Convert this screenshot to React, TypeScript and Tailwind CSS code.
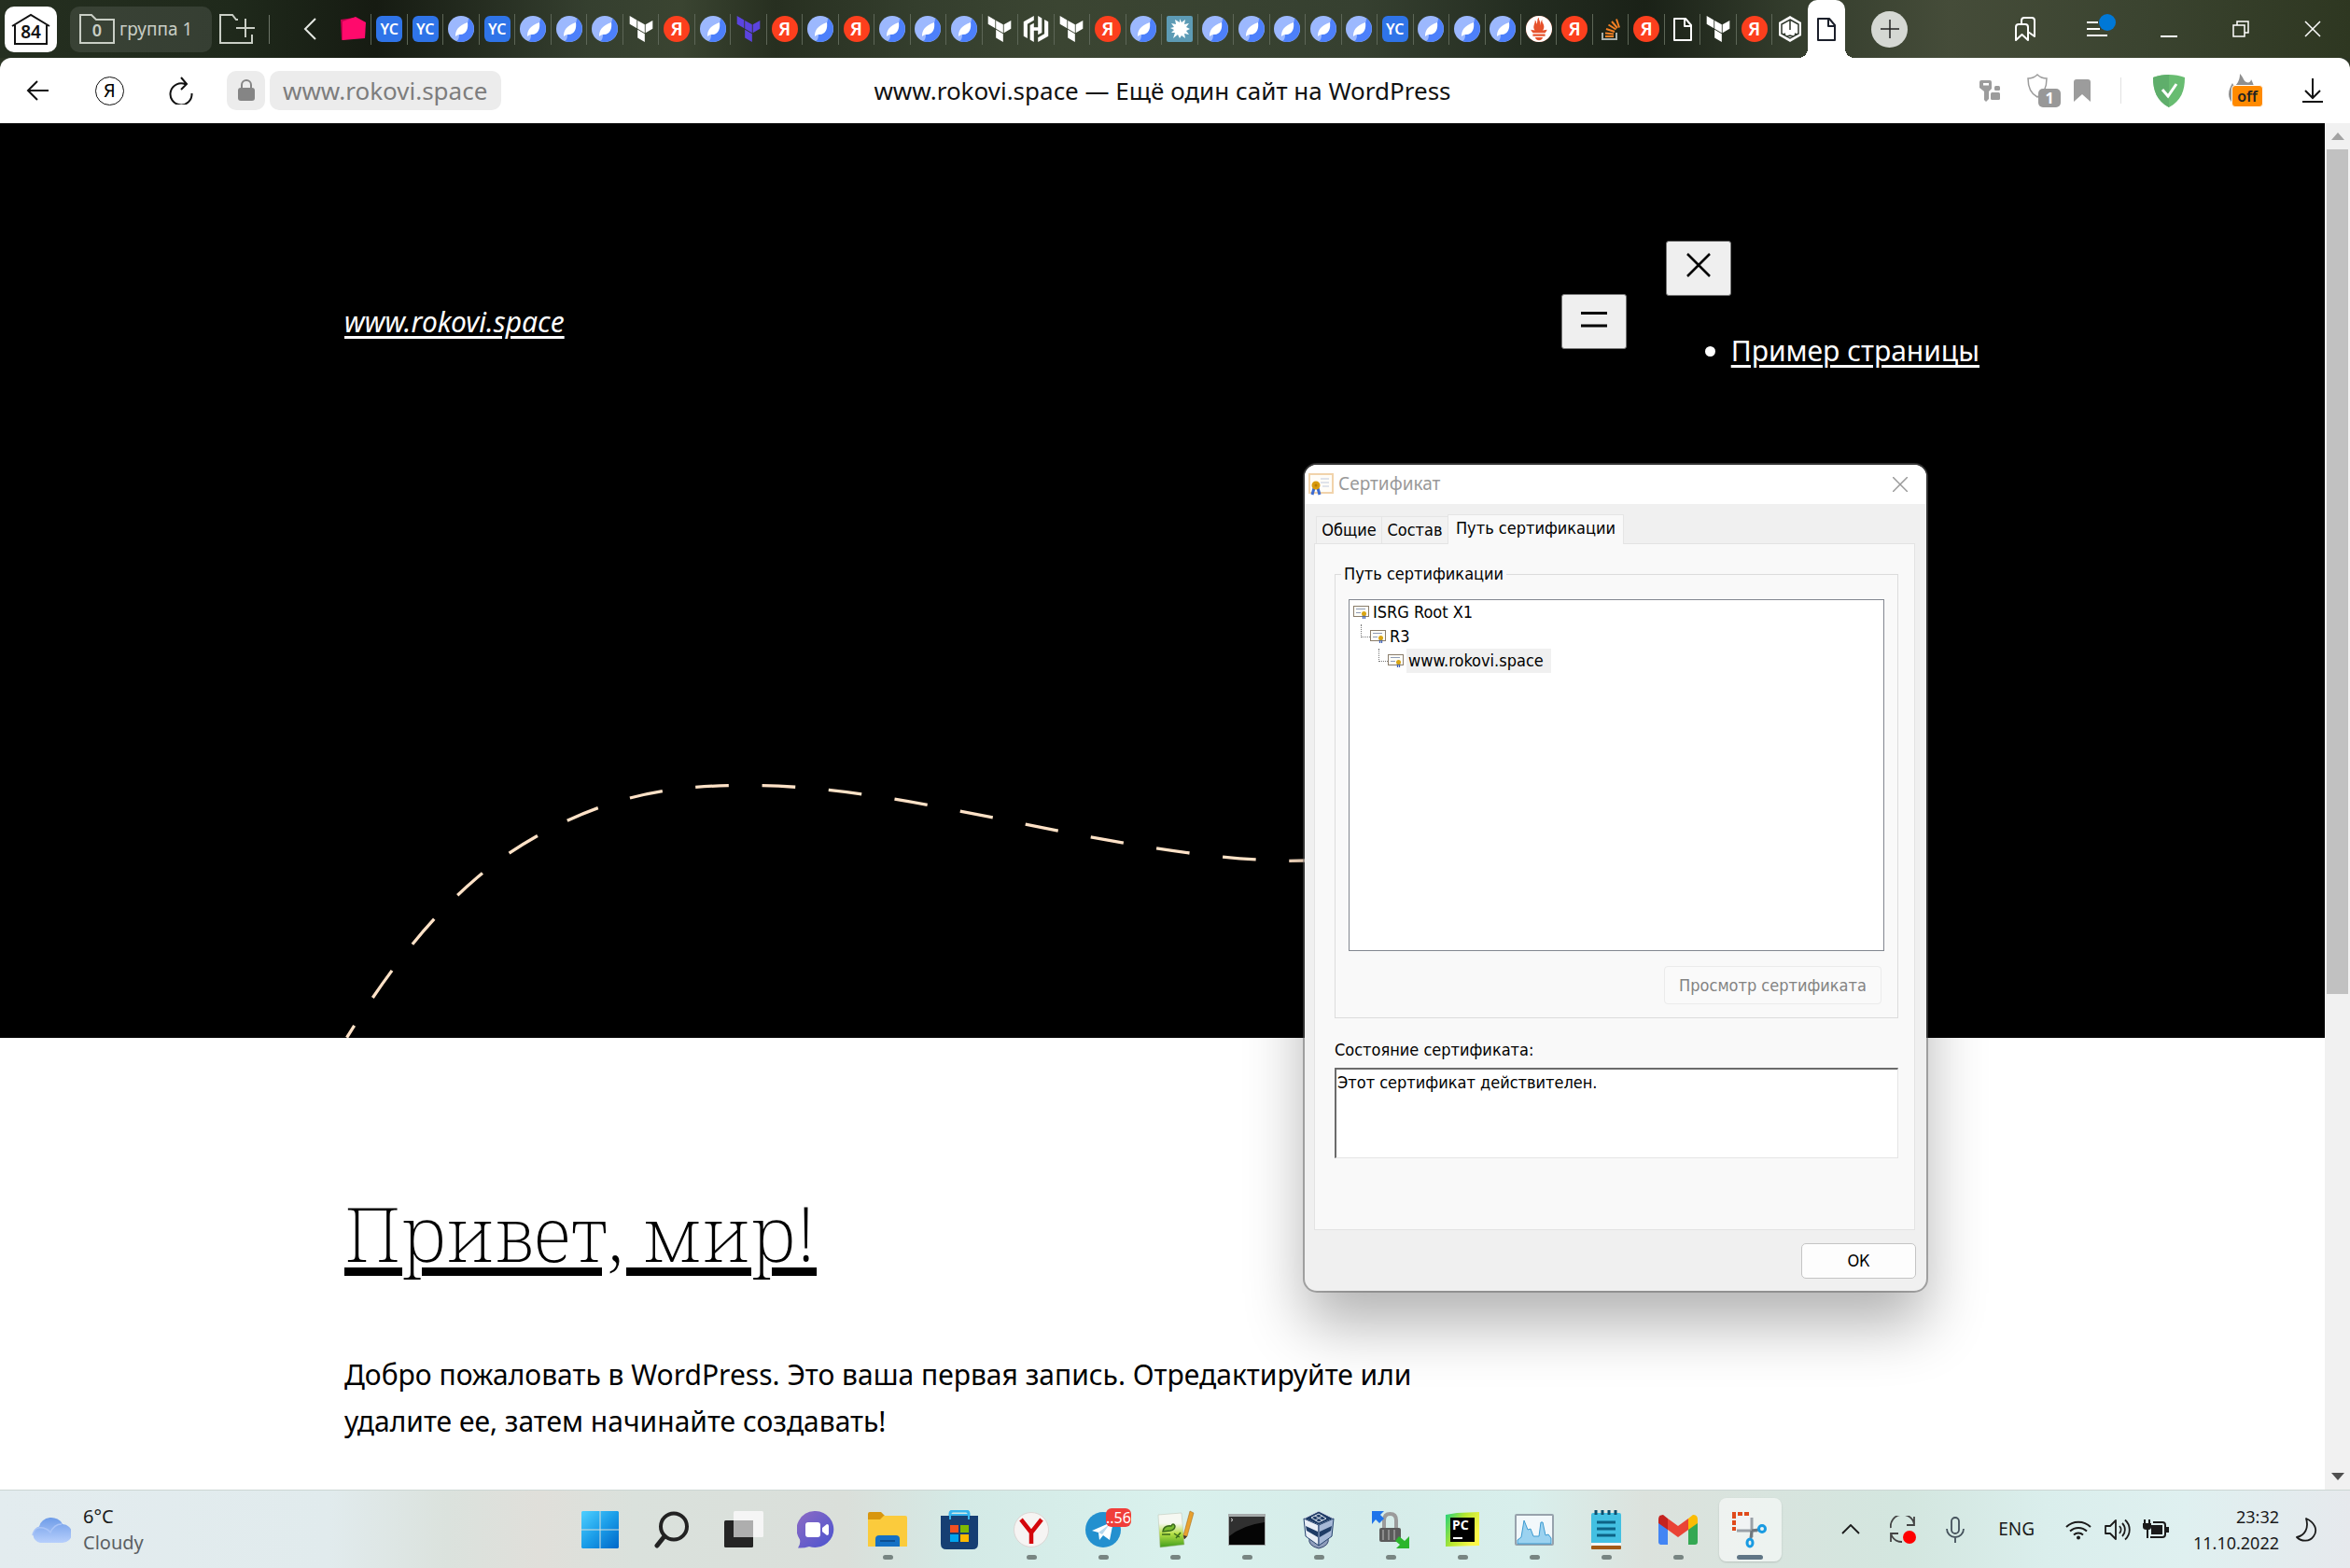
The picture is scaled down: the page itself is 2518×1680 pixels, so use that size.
import React from "react";
import { SiHashicorp, SiPrometheus } from "react-icons/si";

type Fav =
  | "pink" | "yc" | "drop" | "tf" | "tfp" | "ya" | "hc" | "splat"
  | "prom" | "stack" | "file" | "hex";

const tabs: Fav[] = [
  "pink", "yc", "yc", "drop", "yc", "drop", "drop", "drop", "tf", "ya", "drop", "tfp", "ya", "drop",
  "ya", "drop", "drop", "drop", "tf", "hc", "tf", "ya", "drop", "splat", "drop", "drop", "drop", "drop",
  "drop", "yc", "drop", "drop", "drop", "prom", "ya", "stack", "ya", "file", "tf", "ya", "hex",
];

function Terraform({ color }: { color: string }) {
  return (
    <svg viewBox="0 0 24 24" className="size-7" fill={color}>
      <path d="M1.44 0v7.575l6.561 3.79V3.787zm21.12 4.227l-6.561 3.791v7.574l6.56-3.787zM8.72 4.23v7.575l6.561 3.787V8.018zm0 8.405v7.575L15.28 24v-7.578z" />
    </svg>
  );
}

function PageIcon({ color }: { color: string }) {
  return (
    <svg viewBox="0 0 28 28" className="size-7" fill="none" stroke={color} strokeWidth="2" strokeLinejoin="round">
      <path d="M5 3h12l6 7v16H5z" />
      <path d="M16 3v8h7" />
    </svg>
  );
}

function Favicon({ kind }: { kind: Fav }) {
  switch (kind) {
    case "pink":
      return (
        <svg viewBox="0 0 28 28" className="size-7">
          <path d="M0 4l14-2-2 22-11 2z" fill="#c4004f" />
          <path d="M2 6L16 1l11 6-1 17-24 2z" fill="#ff0a6c" />
        </svg>
      );
    case "yc":
      return (
        <span className="flex size-7 items-center justify-center rounded-md bg-[#2f74e8] text-base font-semibold text-white">YC</span>
      );
    case "drop":
      return (
        <svg viewBox="0 0 28 28" className="size-7">
          <circle cx="14" cy="14" r="14" fill="#9cb8fe" />
          <path d="M22 2.500A14 14 0 0 1 9 27C13 25 11 21 13 18s9-7 9-15.500z" fill="#4d80fb" />
          <path d="M21 7c1 6-1 13-8 13-2 0-3 .5-5 2 0-6 2-11 13-15z" fill="#fff" />
        </svg>
      );
    case "tf":
      return <Terraform color="#ffffff" />;
    case "tfp":
      return <Terraform color="#5b44e0" />;
    case "ya":
      return (
        <span className="flex size-7 items-center justify-center rounded-full bg-[#fc3f1d] text-xl leading-none font-semibold text-white">Я</span>
      );
    case "hc":
      return <SiHashicorp className="size-7 text-white" />;
    case "splat":
      return (
        <svg viewBox="0 0 28 28" className="size-7">
          <rect width="28" height="28" rx="2" fill="#5d9bb5" />
          <path d="M14 3l2 4 4-3-1 5 5-1-3 4 4 2-4 2 3 4-5-1 1 5-4-3-2 3-2-4-5 4 2-6-4 0 3-3-4-2 4-1-3-4 5 1-1-5 5 3z" fill="#fff" />
        </svg>
      );
    case "prom":
      return (
        <span className="flex size-7 rounded-full bg-[#e6522c]">
          <SiPrometheus className="size-7 text-white" />
        </span>
      );
    case "stack":
      return (
        <svg viewBox="0 0 28 28" className="size-7" fill="none" strokeWidth="2">
          <path d="M5 18v7h15v-7" stroke="#a9b0ad" />
          <path d="M8 22h9M8 18.500l9 1M9 14l9 3M11.500 9.500l8 5M15 6l6 7M20 3.500l3 9" stroke="#f48024" />
        </svg>
      );
    case "file":
      return <PageIcon color="#ffffff" />;
    case "hex":
      return (
        <svg viewBox="0 0 28 28" className="size-7">
          <path d="M14 0l12 7v14l-12 7-12-7V7z" fill="#fff" />
          <path d="M14 4l9 5v10l-9 5-9-5V9zM14 5v10M9 19l-2 1M19 19l2 1M11 22l3-1 3 1" fill="none" stroke="#2c352a" strokeWidth="1.500" />
        </svg>
      );
  }
}

function TabBar() {
  return (
    <header className="flex h-[62px] items-center bg-[linear-gradient(90deg,#252f20_0%,#1f291b_10%,#161b12_16%,#353f2f_25%,#3a4431_29%,#272f20_33%,#343e2d_39%,#3b4532_45%,#364030_58%,#232c20_65%,#1a2117_70%,#333c2c_76%,#454c39_83%,#3b4430_91%,#2e3721_100%)] pr-0.5 pl-[5px]">
      <button aria-label="Табло" className="flex h-[49px] w-14 items-center justify-center rounded-[10px] bg-white">
        <svg viewBox="0 0 42 34" className="h-[34px] w-[42px]" fill="none" stroke="#111" strokeWidth="2">
          <path d="M1 14L21 2l20 12M4 13v20h34V13" />
          <text x="21" y="27" textAnchor="middle" fontSize="19" fontWeight="600" fill="#111" stroke="none">84</text>
        </svg>
      </button>
      <button className="ml-3.5 flex h-[49px] w-[152px] items-center gap-[5px] rounded-[10px] bg-white/10 pl-2.5 text-[19px] text-[#c9cec5]">
        <svg viewBox="0 0 38 32" className="h-8 w-[38px]" fill="none" stroke="#c9cec5" strokeWidth="2">
          <path d="M1 31V1h12l5 5h19v25z" />
          <text x="19" y="24" textAnchor="middle" fontSize="18" fontWeight="600" fill="#c9cec5" stroke="none">0</text>
        </svg>
        группа 1
      </button>
      <button aria-label="Новая группа" className="ml-2">
        <svg viewBox="0 0 38 32" className="h-8 w-[38px]" fill="none" stroke="#c9cec5" strokeWidth="2">
          <path d="M20 6h-2l-4-5H1v30h34v-9M28 5v20M18 15h20" />
        </svg>
      </button>
      <span className="ml-[15px] h-[31px] w-px bg-[#6d7568]" />
      <button aria-label="Назад по вкладкам" className="ml-9">
        <svg viewBox="0 0 14 24" className="h-6 w-3.5" fill="none" stroke="#e5e8e2" strokeWidth="2">
          <path d="M13 1L2 12l11 11" />
        </svg>
      </button>
      <nav aria-label="Вкладки" className="ml-5 flex min-w-0 flex-1">
        {tabs.map((k, i) => (
          <button
            key={i}
            aria-label={`Вкладка ${i + 1}`}
            className="flex h-[33px] min-w-0 flex-1 items-center justify-center border-l border-[#5d6657] first:border-transparent"
          >
            <Favicon kind={k} />
          </button>
        ))}
      </nav>
      <button aria-label="Текущая вкладка" className="relative flex h-[62px] w-10 items-center justify-center rounded-t-[10px] bg-white">
        <span className="absolute bottom-0 -left-[10px] size-[10px] bg-[radial-gradient(circle_at_0_0,transparent_10px,#fff_10px)]" />
        <span className="absolute -right-[10px] bottom-0 size-[10px] bg-[radial-gradient(circle_at_100%_0,transparent_10px,#fff_10px)]" />
        <PageIcon color="#1b1f2a" />
      </button>
      <button aria-label="Новая вкладка" className="ml-7 flex size-[39px] items-center justify-center rounded-full bg-[#d5d8d3]">
        <svg viewBox="0 0 20 20" className="size-5" stroke="#222" strokeWidth="1.500">
          <path d="M10 0v20M0 10h20" />
        </svg>
      </button>
      <div className="ml-[87px] flex">
        <button aria-label="Закладки" className="flex h-[62px] w-[77px] items-center justify-center">
          <svg viewBox="0 0 24 26" className="h-[26px] w-6" fill="none" stroke="#fff" strokeWidth="2" strokeLinejoin="round">
            <path d="M2 11q0-3 3-3h7q3 0 3 3v14l-6.500-6L2 25zM8 8V4q0-3 3-3h8q3 0 3 3v17l-7-5" />
          </svg>
        </button>
        <button aria-label="Меню" className="relative flex h-[62px] w-[77px] items-center justify-center">
          <svg viewBox="0 0 22 18" className="h-[18px] w-[22px]" stroke="#fff" strokeWidth="2">
            <path d="M0 2h12M0 9h14M0 16h22" />
          </svg>
          <span className="absolute top-[15px] right-[18px] size-[18px] rounded-full bg-[#0078d7]" />
        </button>
        <button aria-label="Свернуть" className="flex h-[62px] w-[77px] items-center justify-center">
          <span className="mt-4 h-0.5 w-[18px] bg-white" />
        </button>
        <button aria-label="Восстановить" className="flex h-[62px] w-[77px] items-center justify-center">
          <svg viewBox="0 0 18 18" className="size-[18px]" fill="none" stroke="#fff" strokeWidth="1.500">
            <path d="M1 5h12v12H1zM5 5V1h12v12h-4" />
          </svg>
        </button>
        <button aria-label="Закрыть" className="flex h-[62px] w-[77px] items-center justify-center">
          <svg viewBox="0 0 18 18" className="size-[18px]" stroke="#fff" strokeWidth="1.500">
            <path d="M1 1l16 16M17 1L1 17" />
          </svg>
        </button>
      </div>
    </header>
  );
}

function Toolbar() {
  return (
    <div className="bg-[#2c3524]">
      <div className="grid h-[70px] grid-cols-[1fr_auto_1fr] items-center rounded-t-xl bg-white">
        <div className="flex items-center pl-7">
          <button aria-label="Назад">
            <svg viewBox="0 0 24 22" className="h-[22px] w-6" fill="none" stroke="#111" strokeWidth="2">
              <path d="M24 11H2M12 1L2 11l10 10" />
            </svg>
          </button>
          <button aria-label="Яндекс" className="ml-[50px] flex size-[31px] items-center justify-center rounded-full border-[1.5px] border-[#111] text-xl leading-none">
            Я
          </button>
          <button aria-label="Обновить" className="ml-12">
            <svg viewBox="0 0 26 30" className="h-[30px] w-[26px]" fill="none" stroke="#111" strokeWidth="2">
              <path d="M18 8.500A11.500 11.500 0 1 0 24.500 18M13 1l6 7-6 6" />
            </svg>
          </button>
          <span className="ml-9 flex h-[42px] w-[41px] items-center justify-center rounded-[10px] bg-[#ececec]">
            <svg viewBox="0 0 18 24" className="h-6 w-[18px]">
              <path d="M4 11V6a5 5 0 0 1 10 0v5" fill="none" stroke="#858585" strokeWidth="2" />
              <rect y="9" width="18" height="14" rx="3" fill="#858585" />
            </svg>
          </span>
          <a href="#" className="ml-[5px] flex h-[42px] w-[248px] items-center rounded-[10px] bg-[#ececec] pl-3.5 text-[26px] text-[#7d7d7d]">
            www.rokovi.space
          </a>
        </div>
        <h2 className="pr-[27px] text-[26px] text-[#111]">www.rokovi.space — Ещё один сайт на WordPress</h2>
        <div className="flex items-center justify-end pr-[29px]">
          <svg viewBox="0 0 24 24" className="h-6 w-6">
            <path d="M1 3q0-2 2-2h9q2 0 2 2v7l-3 3v8l-3 3-2-2V13l-5-4z" fill="#9c9c9c" />
            <rect x="5" y="4" width="6" height="2.500" fill="#fff" />
            <rect x="17" y="7" width="6" height="5" rx="1.500" fill="#9c9c9c" />
            <rect x="13" y="14" width="10" height="8" rx="1.500" fill="#9c9c9c" />
          </svg>
          <span className="relative ml-7 flex h-9 w-9">
            <svg viewBox="0 0 22 26" className="h-[26px] w-[22px]" fill="none" stroke="#9c9c9c" strokeWidth="1.500">
              <path d="M11 1c3 3 6 4 10 4 0 9-2 16-10 20C3 21 1 14 1 5c4 0 7-1 10-4z" />
            </svg>
            <span className="absolute right-0 bottom-0 flex h-5 w-6 items-center justify-center rounded-[5px] bg-[#989898] text-base font-bold text-white">1</span>
          </span>
          <svg viewBox="0 0 18 24" className="ml-3.5 h-6 w-[18px]">
            <path d="M0 3q0-3 3-3h12q3 0 3 3v21l-9-8-9 8z" fill="#9c9c9c" />
          </svg>
          <span className="ml-8 h-7 w-px bg-[#e2e2e2]" />
          <svg viewBox="0 0 34 35" className="ml-[34px] h-[35px] w-[34px]">
            <path d="M17 0c6 0 12 1 17 3 0 14-4 25-17 32C4 28 0 17 0 3 5 1 11 0 17 0z" fill="#68bc71" />
            <path d="M17 0v35C4 28 0 17 0 3 5 1 11 0 17 0z" fill="#5fae6b" />
            <path d="M10 16l6 7 9-13" fill="none" stroke="#fff" strokeWidth="3" />
          </svg>
          <span className="relative ml-[46px] flex h-9 w-[38px]">
            <svg viewBox="0 0 30 36" className="h-9 w-[30px]" fill="#8f8f8f">
              <path d="M13 0c4 4 4 8 7 9 2 1 5 0 5-3 3 6 4 9 4 14 0 9-6 15-14 15S1 29 1 22c0-5 2-8 4-12l2 4c4-4 6-8 6-14z" />
            </svg>
            <span className="absolute right-0 bottom-0 flex h-6 w-[34px] items-center justify-center rounded-[4px] border border-white bg-[#ff8a00] text-base leading-none font-semibold text-[#222]">off</span>
          </span>
          <button aria-label="Загрузки" className="ml-[42px]">
            <svg viewBox="0 0 22 26" className="h-[26px] w-[22px]" fill="none" stroke="#111" strokeWidth="2">
              <path d="M11 0v21M3 13l8 8 8-8M0 25h22" />
            </svg>
          </button>
        </div>
      </div>
    </div>
  );
}

function Site() {
  return (
    <div className="min-w-0 flex-1 overflow-hidden bg-white">
      <header className="bg-black pt-[126px] text-white">
        <div className="flex items-center justify-between pr-[370px] pl-[369px] text-[30px]">
          <a href="#" className="italic underline decoration-[3px] underline-offset-[4px]">www.rokovi.space</a>
          <nav className="flex items-center gap-[42px]">
            <button aria-label="Открыть меню" className="flex h-[59px] w-[70px] justify-center rounded-[3px] border border-[#767676] bg-[#efefef] pt-[18px]">
              <svg viewBox="0 0 28 17" className="h-[17px] w-7" stroke="#000" strokeWidth="3">
                <path d="M0 1.500h28M0 15h28" />
              </svg>
            </button>
            <div>
              <button aria-label="Закрыть меню" className="flex h-[59px] w-[70px] justify-center rounded-[3px] border border-[#767676] bg-[#efefef] pt-3">
                <svg viewBox="0 0 26 26" className="size-[26px]" stroke="#000" strokeWidth="2.500">
                  <path d="M1 1l24 24M25 1L1 25" />
                </svg>
              </button>
              <ul className="mt-[34px] mb-[30px] list-disc pl-[70px] leading-[50px]">
                <li><a href="#" className="underline decoration-[3px] underline-offset-[4px]">Пример страницы</a></li>
              </ul>
            </div>
          </nav>
        </div>
        <svg viewBox="0 828 1400 284" className="mt-[397px] block h-[284px] w-[1400px]" fill="none" stroke="#ffe2c7" strokeWidth="3.300" strokeDasharray="35.7 35.7" strokeDashoffset="20.500">
          <path d="M371.600 1111.700C425 1026 487 945 575 896S733 840.200 816 841.700S982 859.700 1064 876S1274 921 1381 922.300L1400 922" />
        </svg>
      </header>
      <main className="pt-[163px] pl-[369px] text-black">
        <h1 className="font-['Noto_Serif',serif] text-[80px] leading-[92px] font-extralight">
          <a href="#" className="underline decoration-[9px] underline-offset-[6px]">Привет, мир!</a>
        </h1>
        <p className="mt-[81px] max-w-[1160px] text-[30px] leading-[50px]">
          Добро пожаловать в WordPress. Это ваша первая запись. Отредактируйте или удалите ее, затем начинайте создавать!
        </p>
      </main>
    </div>
  );
}

function ScrollBar() {
  return (
    <aside className="flex w-[27px] flex-col items-center bg-[#f1f1f1]">
      <span className="flex h-7 items-center">
        <svg viewBox="0 0 14 8" className="h-2 w-3.5" fill="#a3a3a3"><path d="M0 8l7-8 7 8z" /></svg>
      </span>
      <span className="h-[905px] w-[23px] bg-[#c1c1c1]" />
      <span className="mt-auto flex h-7 items-center">
        <svg viewBox="0 0 14 8" className="h-2 w-3.5" fill="#505050"><path d="M0 0l7 8 7-8z" /></svg>
      </span>
    </aside>
  );
}

function CertIcon() {
  return (
    <svg viewBox="0 0 17 14" className="h-3.5 w-[17px] shrink-0">
      <rect x="0.500" y="0.500" width="16" height="11" fill="#fdfdf8" stroke="#8a7d6b" />
      <path d="M3 3.500h10M3 7.500h5" stroke="#8e9bb5" />
      <path d="M10.500 10v4M12.500 10v4" stroke="#3f62b5" strokeWidth="1.300" />
      <circle cx="11.500" cy="8.500" r="2.500" fill="#d9a514" />
    </svg>
  );
}

function Dialog() {
  return (
    <section
      role="dialog"
      aria-label="Сертификат"
      className="absolute top-[498px] left-[1398px] w-[666px] overflow-hidden rounded-[13px] bg-[#f0f0f0] font-['DejaVu_Sans_Condensed',sans-serif] text-lg text-black shadow-[0_0_0_2px_rgba(100,100,100,0.5),0_36px_64px_rgba(0,0,0,0.3)]"
    >
      <div className="flex h-[42px] items-center bg-white pr-5 pl-1 font-['Noto_Sans',sans-serif] text-[19px] text-[#999]">
        <svg viewBox="0 0 27 24" className="h-6 w-[27px]">
          <rect x="1" y="1" width="25" height="20" fill="#fffdf8" stroke="#f1d3ab" strokeWidth="2" />
          <path d="M13 6h9M13 10h9M15 14h7" stroke="#dfe3ea" strokeWidth="2" />
          <path d="M6 16l-2 7M10 16l2 7" stroke="#3c6bd0" strokeWidth="3" />
          <circle cx="8" cy="13" r="4.500" fill="#d89b0d" />
          <circle cx="8" cy="13" r="1.500" fill="#b87a05" />
        </svg>
        <h2 className="ml-[5px]">Сертификат</h2>
        <button aria-label="Закрыть" className="ml-auto">
          <svg viewBox="0 0 16 16" className="size-4" stroke="#999" strokeWidth="1.500"><path d="M0 0l16 16M16 0L0 16" /></svg>
        </button>
      </div>
      <div role="tablist" className="flex h-[42px] items-end pl-3">
        <button role="tab" className="h-[29px] w-[71px] border border-b-0 border-[#e5e5e5] bg-[#f2f2f2] leading-7">Общие</button>
        <button role="tab" className="h-[29px] w-[70px] border-t border-[#e5e5e5] bg-[#f2f2f2] leading-7">Состав</button>
        <button role="tab" aria-selected="true" className="relative z-10 -mb-px h-8 w-[189px] border border-b-0 border-[#e5e5e5] bg-[#f9f9f9] pb-1 leading-7">Путь сертификации</button>
      </div>
      <div className="mr-3 ml-2.5 border border-[#e3e3e3] bg-[#f9f9f9] px-[17px] pt-[19px] pb-[76px] pl-[21px]">
        <fieldset className="border border-[#dcdcdc] px-3.5 pb-3.5">
          <legend className="-ml-2 px-[3px] leading-[26px]">Путь сертификации</legend>
          <ul className="mt-3.5 h-[377px] border border-[#828790] bg-white leading-[26px]">
            <li className="flex h-[26px] items-center pl-1"><CertIcon /><span className="ml-1">ISRG Root X1</span></li>
            <li className="flex h-[26px] items-center pl-3">
              <span className="h-3.5 w-2.5 self-start border-b border-l border-dotted border-[#777]" />
              <CertIcon /><span className="ml-1">R3</span>
            </li>
            <li className="flex h-[26px] items-center pl-[31px]">
              <span className="h-3.5 w-2.5 self-start border-b border-l border-dotted border-[#777]" />
              <CertIcon /><span className="ml-[3px] bg-[#f0f0f0] pr-2 pl-0.5">www.rokovi.space</span>
            </li>
          </ul>
          <div className="mt-4 flex justify-end pr-[3px]">
            <button disabled className="h-[41px] w-[233px] rounded-[4px] border border-[#ebebeb] bg-[#fafafa] text-[#838383]">Просмотр сертификата</button>
          </div>
        </fieldset>
        <label htmlFor="status" className="mt-[21px] block leading-[26px]">Состояние сертификата:</label>
        <textarea
          id="status"
          readOnly
          defaultValue="Этот сертификат действителен."
          className="mt-1.5 block h-[97px] w-full resize-none border-t-2 border-r border-b border-l-2 border-t-[#6b6b6b] border-r-[#e5e5e5] border-b-[#e5e5e5] border-l-[#6b6b6b] bg-white pl-px leading-7"
        />
      </div>
      <div className="flex h-[65px] items-start justify-end pt-3.5 pr-[11px]">
        <button className="h-[38px] w-[123px] rounded-[5px] border border-[#c4c4c4] bg-[#fdfdfd]">ОК</button>
      </div>
    </section>
  );
}

const apps: { name: string; running?: boolean; active?: boolean; icon: React.ReactNode }[] = [
  {
    name: "Пуск",
    icon: (
      <svg viewBox="0 0 40 40" className="size-10">
        <defs>
          <linearGradient id="win" x1="0" y1="0" x2="1" y2="1">
            <stop offset="0" stopColor="#4fd0ff" /><stop offset="0.500" stopColor="#1b9de8" /><stop offset="1" stopColor="#0067c8" />
          </linearGradient>
        </defs>
        <path d="M1 0h18.500v19.500H0V1zM20.500 0H39l1 1v18.500H20.500zM0 20.500h19.500V40H1l-1-1zM20.500 20.500H40V39l-1 1H20.500z" fill="url(#win)" />
      </svg>
    ),
  },
  {
    name: "Поиск",
    icon: (
      <svg viewBox="0 0 40 40" className="size-10" fill="none" stroke="#222" strokeLinecap="round">
        <circle cx="22" cy="16.500" r="14" strokeWidth="4" /><path d="M12 27L4 37" strokeWidth="5" />
      </svg>
    ),
  },
  {
    name: "Представление задач",
    icon: (
      <svg viewBox="0 0 42 40" className="h-10 w-[42px]">
        <rect x="0" y="10" width="31" height="29" rx="1.500" fill="#242424" />
        <rect x="10" y="0" width="32" height="28" rx="1.500" fill="#f7f7f7" fillOpacity="0.900" />
        <rect x="10" y="10" width="21" height="18" fill="#aeaeae" />
      </svg>
    ),
  },
  {
    name: "Чат",
    icon: (
      <svg viewBox="0 0 40 40" className="size-10">
        <defs><linearGradient id="chat" x1="0" y1="0" x2="1" y2="1"><stop offset="0" stopColor="#8e6bc4" /><stop offset="1" stopColor="#4a53cf" /></linearGradient></defs>
        <path d="M20 0a20 19.500 0 1 1-7 38q-6 2-12 1.500 3-4 2-9A20 19.500 0 0 1 20 0z" fill="url(#chat)" />
        <rect x="9" y="12" width="16" height="16" rx="3" fill="#fff" /><path d="M27 18l5-4q2 0 2 2v8q0 2-2 2l-5-4z" fill="#fff" />
      </svg>
    ),
  },
  {
    name: "Проводник", running: true,
    icon: (
      <svg viewBox="0 0 42 38" className="h-[38px] w-[42px]">
        <path d="M0 2q0-2 2-2h12l5 5v8H0z" fill="#d8960f" /><path d="M0 8h13l4-4h23q2 0 2 2v31H0z" fill="#fbcb3c" />
        <path d="M8 37v-8q0-4 4-4h18q4 0 4 4v8z" fill="#1470c4" /><path d="M13 31h16" stroke="#0b4e93" strokeWidth="2" />
      </svg>
    ),
  },
  {
    name: "Store",
    icon: (
      <svg viewBox="0 0 40 42" className="h-[42px] w-10">
        <path d="M10 10V4q0-3 3-3h14q3 0 3 3v6" fill="none" stroke="#37b4ee" strokeWidth="3" />
        <path d="M0 6h40v30q0 6-6 6H6q-6 0-6-6z" fill="#173f73" />
        <path d="M10 5h20v5" fill="none" stroke="#37b4ee" strokeWidth="2" /><path d="M10 5v5" stroke="#37b4ee" strokeWidth="2" />
        <path d="M10 16h9v8h-9z" fill="#f25022" /><path d="M21 16h9v8h-9z" fill="#7fba00" />
        <path d="M10 26h9v8h-9z" fill="#00a4ef" /><path d="M21 26h9v8h-9z" fill="#ffb900" />
      </svg>
    ),
  },
  {
    name: "Яндекс Браузер", running: true,
    icon: (
      <svg viewBox="0 0 40 40" className="size-10">
        <circle cx="20" cy="20" r="18.500" fill="#f6f4f3" stroke="#dcd6d4" />
        <path d="M9 9l11 14L31 9M20 22v13" fill="none" stroke="#d4070c" strokeWidth="4.500" />
      </svg>
    ),
  },
  {
    name: "Telegram", running: true,
    icon: (
      <span className="relative flex">
        <svg viewBox="0 0 40 40" className="size-10">
          <circle cx="20" cy="20" r="19" fill="#2390cf" /><path d="M8 21l23-10-4 20-7-5-4 5-1-8z" fill="#fff" /><path d="M15 23l12-9-8 11" fill="#b8d8ec" />
        </svg>
        <span className="absolute -top-[3px] -right-[10px] flex h-5 w-[27px] items-center justify-center rounded-md bg-[#f03e3a] text-base text-white">..56</span>
      </span>
    ),
  },
  {
    name: "Notepad++", running: true,
    icon: (
      <svg viewBox="0 0 42 42" className="size-[42px]">
        <defs><linearGradient id="npp" x1="0" y1="0" x2="0" y2="1"><stop offset="0.300" stopColor="#f6f8f2" /><stop offset="0.600" stopColor="#b6e045" /><stop offset="1" stopColor="#3f9c1c" /></linearGradient></defs>
        <path d="M3 5l25-2 3 34-26 3z" fill="url(#npp)" stroke="#b9c0b0" strokeWidth="0.500" />
        <path d="M8 23q1-7 9-6 2-4 4 0 0 4-5 5zM7 26h9M20 25l6 4M22 30l5-6" stroke="#3a6b1b" strokeWidth="1.500" fill="#78bb2f" />
        <path d="M37 1l4 2-7 25-3 3-1-4z" fill="#e8a02e" stroke="#9a6113" strokeWidth="0.500" /><path d="M30 27l1 4 3-3z" fill="#333" />
      </svg>
    ),
  },
  {
    name: "Командная строка", running: true,
    icon: (
      <svg viewBox="0 0 40 34" className="h-[34px] w-10">
        <rect width="40" height="34" fill="#a6abab" /><rect x="1" y="3" width="38" height="30" fill="#050505" /><path d="M1 3h38v6Q16 12 1 24z" fill="#303030" />
        <path d="M3 5l2 1.500-2 1.500" stroke="#ddd" fill="none" />
      </svg>
    ),
  },
  {
    name: "VirtualBox", running: true,
    icon: (
      <svg viewBox="0 0 36 42" className="h-[42px] w-9">
        <path d="M8 30q-2 8 10 11 12-3 10-11z" fill="#8f9dbb" stroke="#35466e" />
        <path d="M18 1l16 8-16 7L2 9z" fill="#1f3c66" stroke="#dfe6f0" /><path d="M2 9l16 7v22L4 28z" fill="#e9eef6" stroke="#26436e" />
        <path d="M34 9l-16 7v22l14-10z" fill="#a6b8d6" stroke="#26436e" /><path d="M4 17l13 6v6L5 22zM32 17l-13 6v6l12-7z" fill="#1f3c66" /><path d="M10 8l8-4 8 5-8 4zM14 6l8 5M22 6l-8 5" fill="none" stroke="#dfe6f0" />
      </svg>
    ),
  },
  {
    name: "WinSCP", running: true,
    icon: (
      <svg viewBox="0 0 42 42" className="size-[42px]">
        <path d="M14 20v-9q0-7 6.500-7T27 11v9" fill="none" stroke="#9b9b9b" strokeWidth="4" />
        <rect x="9" y="19" width="23" height="15" rx="2" fill="#5b5b5b" /><path d="M13 21v11M19 21v11M25 21v11" stroke="#8c8c8c" strokeWidth="2" />
        <path d="M1 1h13l-4 4 4 4-5 5-4-4-4 5z" fill="#1e74ea" /><path d="M41 41H27l4-4-5-4 4-5 6 5 5-5z" fill="#2bb52b" />
      </svg>
    ),
  },
  {
    name: "PyCharm", running: true,
    icon: (
      <svg viewBox="0 0 38 38" className="size-[38px]">
        <defs><linearGradient id="pc" x1="0" y1="0" x2="1" y2="0.500"><stop offset="0" stopColor="#1fd07f" /><stop offset="0.500" stopColor="#b5e62e" /><stop offset="1" stopColor="#fcf84a" /></linearGradient></defs>
        <path d="M1 3l12-2 24-1v36l-36 1z" fill="url(#pc)" /><rect x="6" y="6" width="26" height="26" fill="#000" />
        <text x="8" y="19" fontSize="14" fontWeight="700" fill="#fff">PC</text><path d="M9 28h10" stroke="#fff" strokeWidth="2" />
      </svg>
    ),
  },
  {
    name: "Монитор ресурсов", running: true,
    icon: (
      <svg viewBox="0 0 42 34" className="h-[34px] w-[42px]">
        <rect x="1" y="1" width="40" height="32" rx="1" fill="#f2f8fb" stroke="#97a2ac" strokeWidth="2" />
        <path d="M3 28l4-3 3-18 4 10 3-1 3 8h6l2-15 2 0 3 14 3-1 3 4v6H3z" fill="#9bd2f0" stroke="#3d9bd1" />
      </svg>
    ),
  },
  {
    name: "Блокнот", running: true,
    icon: (
      <svg viewBox="0 0 32 42" className="h-[42px] w-8">
        <rect y="3" width="32" height="34" rx="2" fill="#43c0e2" /><rect y="35" width="32" height="3" fill="#f5f5f5" /><rect y="38" width="32" height="4" rx="1" fill="#a35a17" />
        <path d="M5 0v5M12 0v5M19 0v5M26 0v5" stroke="#0c4f6e" strokeWidth="3" /><path d="M6 13h20M6 20h20M6 27h20" stroke="#0d6285" strokeWidth="3" />
      </svg>
    ),
  },
  {
    name: "Gmail", running: true,
    icon: (
      <svg viewBox="0 0 42 32" className="h-8 w-[42px]">
        <path d="M0 6l10 7v19H3q-3 0-3-3z" fill="#4285f4" /><path d="M42 6l-10 7v19h7q3 0 3-3z" fill="#34a853" />
        <path d="M0 5q0-5 5-5l5 4v12L0 9z" fill="#c5221f" /><path d="M42 5q0-5-5-5l-5 4v12l10-7z" fill="#fbbc04" /><path d="M10 4l11 8 11-8v12l-11 8-11-8z" fill="#ea4335" />
      </svg>
    ),
  },
  {
    name: "Ножницы", running: true, active: true,
    icon: (
      <svg viewBox="0 0 40 40" className="size-10" fill="none">
        <path d="M5 5h17v17H5z" fill="#f1f3f4" />
        <path d="M1 3h4M7 3h5M14 3h5M3 5v3M3 10v5M3 17v4" stroke="#e04a1b" strokeWidth="4" />
        <path d="M6 21h22M22 7v21" stroke="#9aa1a7" strokeWidth="3" />
        <path d="M22 21l7-1M22 21l-1 8" stroke="#6f777d" strokeWidth="3" />
        <ellipse cx="33" cy="19" rx="3.500" ry="3.500" stroke="#199be2" strokeWidth="3" /><ellipse cx="20" cy="34" rx="3" ry="4" stroke="#199be2" strokeWidth="3" />
      </svg>
    ),
  },
];

function Taskbar() {
  return (
    <footer className="grid h-[84px] grid-cols-[1fr_auto_1fr] items-center border-t border-[#ccd6d3] bg-[linear-gradient(90deg,#e3ecef_0%,#e1ebed_14%,#dbe2dd_19%,#e0dfda_23%,#dae1dc_27%,#dadfda_36%,#d4eae6_41%,#d9f1ed_50%,#d6ece9_58%,#d8efec_65%,#dce2dd_70%,#d3e6df_81%,#daeeec_87%,#dff0f0_93%,#e6e9ed_100%)] text-[#1b1b1b]">
      <button className="flex items-center pl-[34px] text-left">
        <svg viewBox="0 0 42 28" className="h-7 w-[42px]">
          <defs><linearGradient id="cloud" x1="0" y1="0" x2="0" y2="1"><stop offset="0" stopColor="#6e9ce8" /><stop offset="1" stopColor="#b7cffc" /></linearGradient></defs>
          <path d="M9 28a9 9 0 0 1-1-17.500A13 11 0 0 1 33 8a10 10 0 0 1 0 20z" fill="url(#cloud)" />
          <path d="M1 20q2-10 11-8 5 1 8 5 4-9 12-9" fill="none" stroke="#a9c4f7" strokeWidth="1.500" />
        </svg>
        <span className="ml-[13px] flex flex-col text-xl leading-7">
          <span>6°C</span><span className="text-[#5b5f62]">Cloudy</span>
        </span>
      </button>
      <nav aria-label="Приложения" className="flex">
        {apps.map((a) => (
          <button
            key={a.name}
            aria-label={a.name}
            className={
              a.active
                ? "relative mx-[5px] flex h-[68px] w-[67px] items-center justify-center rounded-lg bg-white/55 shadow-[0_1px_2px_rgba(0,0,0,0.15)]"
                : "relative mx-[5px] flex h-[68px] w-[67px] items-center justify-center"
            }
          >
            {a.icon}
            {a.running && (
              <span
                className={
                  a.active
                    ? "absolute bottom-0.5 h-[5px] w-7 rounded-full bg-[#5f7585]"
                    : "absolute bottom-0.5 h-[5px] w-[11px] rounded-full bg-[#788582]"
                }
              />
            )}
          </button>
        ))}
      </nav>
      <div className="flex items-center justify-end pr-[35px]">
        <svg viewBox="0 0 20 12" className="h-3 w-5" fill="none" stroke="#1b1b1b" strokeWidth="1.800"><path d="M1 10l9-9 9 9" /></svg>
        <svg viewBox="0 0 28 30" className="ml-8 h-[30px] w-7" fill="none" stroke="#444" strokeWidth="1.800">
          <path d="M1 13A12.500 12 0 0 1 26 9M26 1v9h-8M1 28v-9h8M1 19q3 9 12 9" /><circle cx="21" cy="23" r="7" fill="#f00" stroke="none" />
        </svg>
        <svg viewBox="0 0 20 28" className="ml-8 h-7 w-5" fill="none" stroke="#45525c" strokeWidth="1.800">
          <rect x="6" y="1" width="8" height="17" rx="4" /><path d="M1 13a9 9 0 0 0 18 0M10 22v6" />
        </svg>
        <span className="ml-9 text-[19px]">ENG</span>
        <svg viewBox="0 0 28 22" className="ml-[33px] h-[22px] w-7" fill="none" stroke="#1b1b1b" strokeWidth="2">
          <path d="M1 8a18.500 18.500 0 0 1 26 0M5 12.500a13 13 0 0 1 18 0M9 16.500a7.500 7.500 0 0 1 10 0" /><circle cx="14" cy="19.500" r="2" fill="#1b1b1b" stroke="none" />
        </svg>
        <svg viewBox="0 0 28 24" className="ml-3.5 h-6 w-7" fill="none" stroke="#1b1b1b" strokeWidth="1.800" strokeLinejoin="round">
          <path d="M1 8h5l6-6v20l-6-6H1zM16 8a6 6 0 0 1 0 8M19 5a10 10 0 0 1 0 14M22 1.500a14 14 0 0 1 0 21" />
        </svg>
        <svg viewBox="0 0 28 22" className="ml-[13px] h-[22px] w-7" fill="#1b1b1b">
          <path d="M2 0v4M7 0v4" stroke="#1b1b1b" strokeWidth="2" /><path d="M0 4h9v4q0 3-3 3v9H4v-9q-4 0-4-3z" />
          <path d="M11 3h10q3 0 3 3v10q0 3-3 3H8" fill="none" stroke="#1b1b1b" strokeWidth="2" /><rect x="9" y="6" width="12" height="10" /><rect x="25" y="8" width="3" height="6" />
        </svg>
        <span className="ml-[26px] flex flex-col text-right text-lg leading-7"><span>23:32</span><span>11.10.2022</span></span>
        <svg viewBox="0 0 24 26" className="ml-[17px] h-[26px] w-6" fill="none" stroke="#1b1b1b" strokeWidth="1.800" strokeLinejoin="round">
          <path d="M12 1c9 4 13 12 8 19-4 6-13 6-18 1 9-2 13-10 10-20z" />
        </svg>
      </div>
    </footer>
  );
}

export default function App() {
  return (
    <div className="relative flex h-screen flex-col overflow-hidden font-['Noto_Sans',sans-serif]">
      <TabBar />
      <Toolbar />
      <div className="flex min-h-0 flex-1">
        <Site />
        <ScrollBar />
      </div>
      <Taskbar />
      <Dialog />
    </div>
  );
}
